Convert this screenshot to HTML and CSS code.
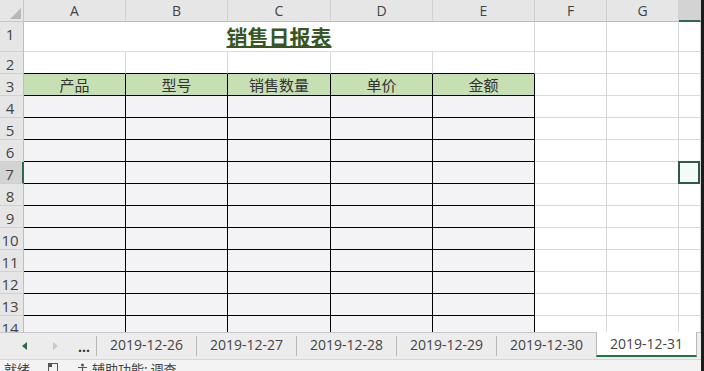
FILE: index.html
```html
<!DOCTYPE html>
<html lang="zh-CN">
<head>
<meta charset="utf-8">
<title>销售日报表</title>
<link rel="stylesheet" href="styles.css">
</head>
<body>
<div class="app">
  <div class="main">
    <div class="viewport">
      <div class="sheet">
        <div class="corner"><svg width="24" height="22" viewBox="0 0 24 22"><polygon points="21,8 21,19 10,19" fill="#b8b8b8"/></svg></div>
        <div class="ch">A</div><div class="ch">B</div><div class="ch">C</div><div class="ch">D</div><div class="ch">E</div><div class="ch">F</div><div class="ch">G</div><div class="ch on"></div>

        <div class="rh">1</div><div class="c title">销售日报表</div><div class="c"></div><div class="c"></div><div class="c"></div>

        <div class="rh">2</div><div class="c tb"></div><div class="c tb"></div><div class="c tb"></div><div class="c tb"></div><div class="c tb"></div><div class="c"></div><div class="c"></div><div class="c"></div>

        <div class="rh">3</div><div class="th">产品</div><div class="th">型号</div><div class="th">销售数量</div><div class="th">单价</div><div class="th">金额</div><div class="c"></div><div class="c"></div><div class="c"></div>

        <div class="rh">4</div><div class="t"></div><div class="t"></div><div class="t"></div><div class="t"></div><div class="t"></div><div class="c"></div><div class="c"></div><div class="c"></div>
        <div class="rh">5</div><div class="t"></div><div class="t"></div><div class="t"></div><div class="t"></div><div class="t"></div><div class="c"></div><div class="c"></div><div class="c"></div>
        <div class="rh">6</div><div class="t"></div><div class="t"></div><div class="t"></div><div class="t"></div><div class="t"></div><div class="c"></div><div class="c"></div><div class="c"></div>
        <div class="rh on">7</div><div class="t"></div><div class="t"></div><div class="t"></div><div class="t"></div><div class="t"></div><div class="c"></div><div class="c"></div><div class="c cur"><span class="sel"></span></div>
        <div class="rh">8</div><div class="t"></div><div class="t"></div><div class="t"></div><div class="t"></div><div class="t"></div><div class="c"></div><div class="c"></div><div class="c"></div>
        <div class="rh">9</div><div class="t"></div><div class="t"></div><div class="t"></div><div class="t"></div><div class="t"></div><div class="c"></div><div class="c"></div><div class="c"></div>
        <div class="rh">10</div><div class="t"></div><div class="t"></div><div class="t"></div><div class="t"></div><div class="t"></div><div class="c"></div><div class="c"></div><div class="c"></div>
        <div class="rh">11</div><div class="t"></div><div class="t"></div><div class="t"></div><div class="t"></div><div class="t"></div><div class="c"></div><div class="c"></div><div class="c"></div>
        <div class="rh">12</div><div class="t"></div><div class="t"></div><div class="t"></div><div class="t"></div><div class="t"></div><div class="c"></div><div class="c"></div><div class="c"></div>
        <div class="rh">13</div><div class="t"></div><div class="t"></div><div class="t"></div><div class="t"></div><div class="t"></div><div class="c"></div><div class="c"></div><div class="c"></div>
        <div class="rh">14</div><div class="t"></div><div class="t"></div><div class="t"></div><div class="t"></div><div class="t"></div><div class="c"></div><div class="c"></div><div class="c"></div>
      </div>
    </div>

    <div class="tabbar">
      <div class="nav">
        <svg class="arrow" width="6" height="8" viewBox="0 0 6 8"><polygon points="5,0 5,8 0,4" fill="#2a6b47"/></svg>
        <svg class="arrow dim" width="6" height="8" viewBox="0 0 6 8"><polygon points="1,0 1,8 6,4" fill="#c8c8c8"/></svg>
        <span class="more">...</span>
      </div>
      <span class="sep"></span><div class="tab">2019-12-26</div>
      <span class="sep"></span><div class="tab">2019-12-27</div>
      <span class="sep"></span><div class="tab">2019-12-28</div>
      <span class="sep"></span><div class="tab">2019-12-29</div>
      <span class="sep"></span><div class="tab">2019-12-30</div>
      <div class="tab active">2019-12-31</div>
    </div>

    <div class="status">
      <span class="st-text">就绪</span>
      <svg class="st-icon" width="12" height="12" viewBox="0 0 12 12"><rect x="1.5" y="1.5" width="9" height="9" fill="none" stroke="#555" stroke-width="1"/><rect x="2" y="2" width="3" height="3" fill="#555"/></svg>
      <svg class="st-person" width="11" height="12" viewBox="0 0 11 12"><circle cx="5.5" cy="2" r="1.5" fill="#555"/><path d="M1 4.5 L10 4.5 M5.5 4.5 L5.5 8 M5.5 8 L3 12 M5.5 8 L8 12" stroke="#555" stroke-width="1.2" fill="none"/></svg>
      <span class="st-text">辅助功能: 调查</span>
    </div>
  </div>
  <div class="edge"></div>
</div>
</body>
</html>
```

FILE: styles.css
```css
* { box-sizing: border-box; }
html, body { margin: 0; padding: 0; }
body {
  width: 704px;
  height: 371px;
  overflow: hidden;
  background: #ffffff;
  font-family: "Open Sans", "Noto Sans CJK SC", sans-serif;
}
.app { display: flex; width: 704px; height: 371px; }
.main { width: 701px; display: flex; flex-direction: column; }
.edge { width: 3px; background: #1c1c1c; }

.viewport { height: 332px; overflow: hidden; }
.sheet {
  display: grid;
  grid-template-columns: 24px 102px 102px 103px 102px 102px 72px 72px 22px;
  grid-template-rows: 22px 30px repeat(13, 22px);
}
.corner {
  background: #e6e6e6;
  border-right: 1px solid #c6c6c6;
  border-bottom: 1px solid #c6c6c6;
}
.corner svg { display: block; }
.ch {
  background: #e6e6e6;
  border-right: 1px solid #d0d0d0;
  border-bottom: 1px solid #bdbdbd;
  color: #444;
  font-size: 14px;
  line-height: 21px;
  text-align: center;
}
.ch.on { background: #d3d3d3; border-bottom: 2px solid #2f6a4c; }
.rh {
  background: #e6e6e6;
  border-right: 1px solid #bdbdbd;
  border-bottom: 1px solid #d0d0d0;
  color: #444;
  font-size: 15px;
  line-height: 22px;
  text-align: center;
  padding-right: 3px;
  padding-top: 1px;
}
.rh.on { background: #d3d3d3; border-right: 2px solid #2f6a4c; }
.c {
  border-right: 1px solid #d9d9d9;
  border-bottom: 1px solid #d9d9d9;
}
.c.tb { border-bottom-color: #000; }
.title {
  grid-column: span 5;
  text-align: center;
  font-family: "Noto Sans CJK SC", sans-serif;
  font-weight: 700;
  font-size: 21px;
  line-height: 29px;
  color: #375623;
  text-decoration: underline;
  text-decoration-thickness: 2px;
  text-underline-offset: 1px;
}
.th {
  background: #c6e0b4;
  border-right: 1px solid #000;
  border-bottom: 1px solid #000;
  font-family: "Noto Sans CJK SC", sans-serif;
  font-size: 15px;
  line-height: 21px;
  color: #333;
  text-align: center;
}
.t {
  background: #f3f2f4;
  border-right: 1px solid #000;
  border-bottom: 1px solid #000;
}
.cur { position: relative; background: #f2fbf7; }
.sel {
  position: absolute;
  left: -1px;
  top: -1px;
  right: 0;
  bottom: -1px;
  border: 2px solid #2f5a48;
}

.tabbar {
  height: 28px;
  border-top: 1px solid #c6c6c6;
  border-bottom: 1px solid #d6d6d6;
  background: #ececec;
  display: flex;
  align-items: flex-start;
}
.nav {
  width: 96px;
  height: 26px;
  display: flex;
  align-items: center;
  padding-left: 22px;
}
.arrow { display: block; }
.arrow.dim { margin-left: 24px; }
.more {
  margin-left: 20px;
  font-size: 14px;
  font-weight: 700;
  color: #333;
  line-height: 26px;
  padding-top: 2px;
}
.sep {
  width: 1px;
  height: 20px;
  margin-top: 3px;
  background: #b8b8b8;
}
.tab {
  width: 99px;
  height: 24px;
  line-height: 24px;
  text-align: center;
  font-size: 14px;
  color: #444;
}
.tab.active {
  width: 101px;
  background: #ffffff;
  border-left: 1px solid #b8b8b8;
  border-right: 1px solid #b8b8b8;
  border-bottom: 2px solid #217346;
  margin-top: -1px;
  height: 25px;
}

.status {
  flex: 1;
  background: #f3f3f3;
  display: flex;
  align-items: flex-start;
  padding-left: 4px;
  overflow: hidden;
}
.st-text {
  font-family: "Noto Sans CJK SC", sans-serif;
  font-size: 13px;
  line-height: 16px;
  color: #444;
  padding-top: 1px;
}
.st-icon { margin-left: 17px; margin-top: 2px; }
.st-person { margin-left: 18px; margin-right: 4px; margin-top: 3px; }
```
